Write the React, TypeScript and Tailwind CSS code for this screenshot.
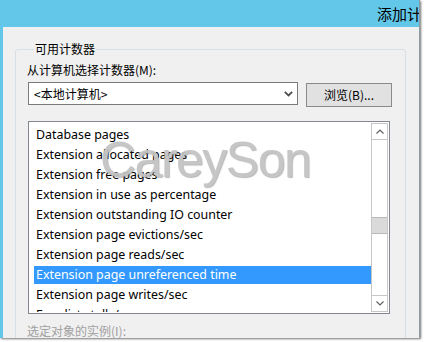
import React from "react";

const items = [
  "Database pages",
  "Extension allocated pages",
  "Extension free pages",
  "Extension in use as percentage",
  "Extension outstanding IO counter",
  "Extension page evictions/sec",
  "Extension page reads/sec",
  "Extension page unreferenced time",
  "Extension page writes/sec",
  "Free list stalls/sec",
];

const cjk = "font-['Microsoft_YaHei','Noto_Sans_CJK_SC',sans-serif]";

function Chevron({ up, className }: { up?: boolean; className?: string }) {
  return (
    <svg width="8" height="5" viewBox="0 0 8 5" className={className}>
      <path
        d={up ? "M0.5 4.5 L4 1 L7.5 4.5" : "M0.5 0.5 L4 4 L7.5 0.5"}
        fill="none"
        stroke="#606060"
        strokeWidth="1.2"
      />
    </svg>
  );
}

export default function App() {
  return (
    <div className="w-[424px] h-[342px] bg-white overflow-hidden">
      <div className="w-[420px] h-[338px] bg-[#63c7e9] pl-[3px] flex flex-col border-r border-[#8c9aa3] shadow-[1px_1px_2px_rgba(0,0,0,0.55)]">
        <div className="h-[27px] shrink-0 flex items-center overflow-hidden">
          <span className={`ml-[374px] whitespace-nowrap text-[15px] leading-none text-black ${cjk}`}>
            添加计数器
          </span>
        </div>
        <div className="flex-1 bg-[#f0f0f0] overflow-hidden relative">
          <fieldset className="ml-[12px] mt-[14px] w-[391px] h-[330px] border border-[#d5dfe5] rounded-[3px] pl-[12px] pr-[13px]">
            <legend className={`ml-[6px] px-[1px] text-[12px] leading-[16px] text-black ${cjk}`}>
              可用计数器
            </legend>
            <div className={`mt-[5px] -ml-[1px] text-[12px] leading-[16px] text-black ${cjk}`}>
              从计算机选择计数器(M):
            </div>
            <div className="mt-[4px] flex items-start">
              <div className="w-[270px] h-[23px] bg-white border border-[#7a7a7a] flex items-center justify-between pl-[5px] pr-[4px]">
                <span className={`text-[12px] leading-none text-black ${cjk}`}>&lt;本地计算机&gt;</span>
                <svg width="9" height="6" viewBox="0 0 9 6">
                  <path d="M0.8 0.8 L4.5 4.5 L8.2 0.8" fill="none" stroke="#505050" strokeWidth="1.8" />
                </svg>
              </div>
              <div className="ml-[8px] mt-[1px] w-[86px] h-[24px] bg-[#e1e1e1] border border-[#8a8a8a] flex items-center justify-center">
                <span className={`text-[12px] leading-none text-black ${cjk}`}>浏览(B)...</span>
              </div>
            </div>
            <div className="mt-[14px] w-[362px] h-[193px] bg-white border border-[#828790] p-[1px] flex relative">
              <div className="flex-1 overflow-hidden pl-[4px] pt-[3px]">
                {items.map((t, i) => (
                  <div key={t} className="h-[20px]">
                    <div
                      className={`h-[18px] pl-[2px] flex items-center whitespace-nowrap text-[12.4px] font-['Segoe_UI','Noto_Sans',sans-serif] ${
                        i === 7 ? "bg-[#3399ff] text-white" : "text-black"
                      }`}
                    >
                      {t}
                    </div>
                  </div>
                ))}
              </div>
              <div className="w-[17px] border border-[#c7c7c7] flex flex-col">
                <div className="h-[16px] border-b border-[#c7c7c7] flex items-center justify-center">
                  <Chevron up />
                </div>
                <div className="flex-1">
                  <div className="mt-[77px] h-[17px] bg-[#dadada] border-y border-[#b9b9b9]" />
                </div>
                <div className="h-[16px] border-t border-[#c7c7c7] flex items-center justify-center">
                  <Chevron />
                </div>
              </div>
              <div className="absolute left-[71px] top-[13px] text-[50px] leading-none tracking-[-1.5px] text-[#c3c3c3] font-['Liberation_Sans',Arial,sans-serif] [text-shadow:1px_1px_1px_rgba(90,90,90,0.45)] opacity-95 pointer-events-none">
                CareySon
              </div>
            </div>
            <div className={`mt-[9px] -ml-[1px] text-[12px] leading-[16px] text-[#a0a0a0] ${cjk}`}>
              选定对象的实例(I):
            </div>
          </fieldset>
        </div>
      </div>
    </div>
  );
}
